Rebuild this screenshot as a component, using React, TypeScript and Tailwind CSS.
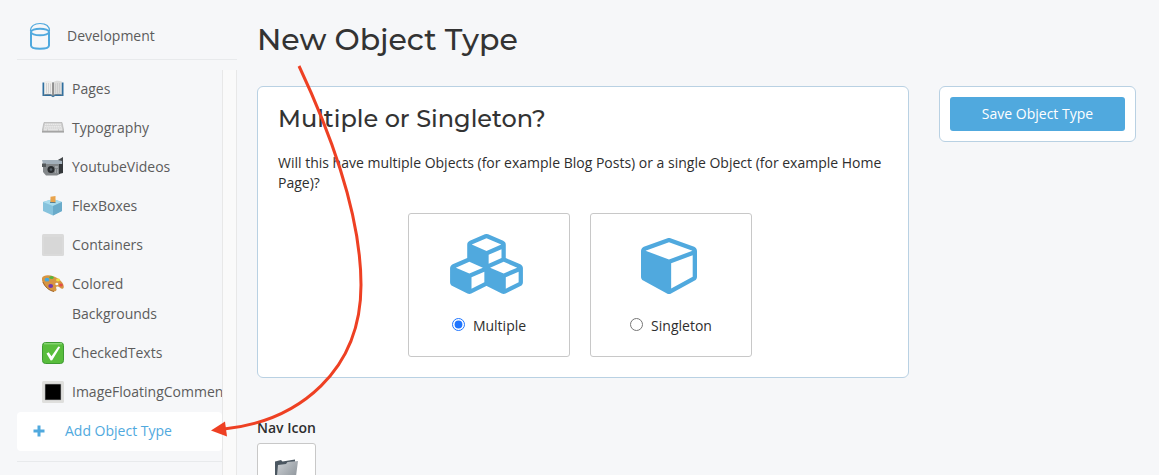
import React from "react";

const sans = "font-['Open_Sans','Noto_Sans',sans-serif]";
const display = "font-['Montserrat','Inter',sans-serif]";

function BucketIcon() {
  return (
    <svg width="22" height="28" viewBox="0 0 22 28" fill="none" stroke="#50a9de" aria-hidden="true">
      <path d="M1.500 9C1.500 4 5.500 1.500 11 1.500S20.500 4 20.500 9" strokeWidth="1.200" />
      <ellipse cx="11" cy="10" rx="9" ry="3.300" strokeWidth="2" />
      <path d="M2 9.500V23.500c0 2 3.500 3.200 9 3.200s9-1.200 9-3.200V9.500" strokeWidth="2" />
    </svg>
  );
}

function BookIcon() {
  return (
    <svg width="22" height="22" viewBox="0 0 22 22" aria-hidden="true">
      <path d="M.5 4.500h21V18h-8.500l-2 1.200L9 18H.5z" fill="#2f6f9f" />
      <path d="M2.200 3.500c3-1 7-1 8.800 1v13c-2-1.500-6-1.500-8.800-.5z" fill="#efeeec" />
      <path d="M19.800 3.500c-3-1-7-1-8.800 1v13c2-1.500 6-1.500 8.800-.5z" fill="#dcdcdb" />
      <path d="M11 4.500v13" stroke="#5b5b5d" strokeWidth="1.200" />
      <path d="M4.500 5v10M6.500 5v10M8.500 5.500v10M13.500 5.500v10M15.500 5v10M17.500 5v10" stroke="#bbb" strokeWidth=".5" />
      <path d="M1.500 17c3-1 7-1 9.500.8 2.500-1.800 6.500-1.800 9.500-.8" fill="none" stroke="#6f8290" />
    </svg>
  );
}

function KeyboardIcon() {
  return (
    <svg width="22" height="22" viewBox="0 0 22 22" aria-hidden="true">
      <path d="M2 5.500h18l1.800 8.500H.2z" fill="#cfcfcf" stroke="#a9a9a9" strokeWidth=".6" />
      <path d="M0 14h22v1.600H0z" fill="#a5a5a5" />
      <path d="M3 7.300h16M2.500 9.200h17M2 11h18" stroke="#f4f4f4" strokeWidth="1.100" strokeDasharray="1.500 .4" />
      <path d="M2 12.800h3M6 12.800h10M17 12.800h3" stroke="#eee" />
    </svg>
  );
}

function CameraIcon() {
  return (
    <svg width="22" height="22" viewBox="0 0 22 22" aria-hidden="true">
      <path d="M15 4.500l6-3.500v7h-6z" fill="#44484b" />
      <path d="M0 4h16l4 1v3H1z" fill="#a3b0bb" />
      <path d="M1 8h17v10l-3 1.500H4L1 16z" fill="#83878a" />
      <path d="M17 8h4v9l-4 1z" fill="#33373a" />
      <path d="M0 7.500h4V11H0z" fill="#54585b" />
      <circle cx="9" cy="13.500" r="3.500" fill="#292c2f" />
      <circle cx="9" cy="13.500" r="1.300" fill="#59616a" />
      <path d="M13 11h3M13 14h1M15 14h1M13 16h1M15 16h1" stroke="#c0c5c9" />
    </svg>
  );
}

function BallotIcon() {
  return (
    <svg width="22" height="22" viewBox="0 0 22 22" aria-hidden="true">
      <path d="M1 7l10-3L20 7v9l-9 4.500L1 16z" fill="#86c3dd" />
      <path d="M1 7l10-3L20 7l-9 4z" fill="#a9dced" />
      <path d="M11 11l9-4v9l-9 4.500z" fill="#6aabca" />
      <path d="M8 7.300l5.500.3" stroke="#45748d" />
      <path d="M8.500 1.800L13.500 1v6.200l-5-.2z" fill="#e9a44d" />
    </svg>
  );
}

function PaletteIcon() {
  return (
    <svg width="22" height="22" viewBox="0 0 22 22" aria-hidden="true">
      <path d="M0 5c1-3 7-3.500 12-1.500 6 2.300 10 7 9.800 10.500-.2 2.500-2.500 2-4 .5-2-2-4.500-1-3.500 1 1 2-1 3.500-3.500 2.800C5 17-1 9.500 0 5z" fill="#d79542" />
      <path d="M1 9c2 5 6 8.500 11 9.500" stroke="#9e652b" fill="none" />
      <ellipse cx="9.500" cy="4.500" rx="2.200" ry="1.500" fill="#55b63c" />
      <ellipse cx="5" cy="6.700" rx="2.300" ry="1.900" fill="#44a9df" />
      <ellipse cx="16" cy="7" rx="2" ry="1.400" fill="#eedb3f" />
      <ellipse cx="8.700" cy="13" rx="2.400" ry="1.900" fill="#7138ae" />
      <ellipse cx="19" cy="12" rx="1.900" ry="1.500" fill="#e14e46" />
      <ellipse cx="14.800" cy="11" rx="1.500" ry="1.200" fill="#f6f7f9" />
    </svg>
  );
}

function LightSquareIcon() {
  return (
    <svg width="22" height="22" viewBox="0 0 22 22" aria-hidden="true">
      <rect width="22" height="22" rx="1.500" fill="#dadada" />
      <rect x="2" y="3" width="18" height="17" fill="#d7d7d7" />
    </svg>
  );
}

function CheckIcon() {
  return (
    <svg width="22" height="22" viewBox="0 0 22 22" aria-hidden="true">
      <rect x=".5" y=".5" width="21" height="21" rx="3" fill="#58bd3c" stroke="#3e9a32" />
      <path d="M2 1.800h18" stroke="#99df86" />
      <path d="M4.500 11.500l2.200-1.300 2.800 4L16.300 4.500l1.900.4-8 13.300-1.500.2z" fill="#fff" />
    </svg>
  );
}

function BlackSquareIcon() {
  return (
    <svg width="22" height="22" viewBox="0 0 22 22" aria-hidden="true">
      <rect width="22" height="22" rx="1.500" fill="#dfdfdd" />
      <rect x="3" y="3" width="16" height="16" rx=".5" fill="#000" stroke="#bbb" strokeWidth=".6" />
    </svg>
  );
}

function FolderIcon() {
  return (
    <svg width="26" height="30" viewBox="0 0 26 30" aria-hidden="true">
      <defs>
        <linearGradient id="folder-front" x1="0" y1="0" x2="1" y2="1">
          <stop offset="0" stopColor="#cfd3d7" />
          <stop offset="1" stopColor="#7d858c" />
        </linearGradient>
      </defs>
      <path d="M1 3.500l6-1.500 1.500 1.500L21 1.500v24L1 28z" fill="#4b5761" />
      <path d="M4 7l8-1 1.500-2L24 3l-3 23-19 3z" fill="url(#folder-front)" />
    </svg>
  );
}

function CubesIcon() {
  return (
    <svg width="73" height="60" viewBox="0 0 2176 1792" fill="#50a9de" aria-hidden="true">
      <path d="M640 1632l384-192v-314l-384 164v342zm-64-454l404-173-404-173-404 173zm1088 454l384-192v-314l-384 164v342zm-64-454l404-173-404-173-404 173zm-448-293l384-165v-266l-384 164v267zm-64-379l441-189-441-189-441 189zm1088 518v416q0 36-19 67t-52 47l-448 224q-25 14-57 14t-57-14l-448-224q-4-2-7-4-2 2-7 4l-448 224q-25 14-57 14t-57-14l-448-224q-33-16-52-47t-19-67v-416q0-38 21.500-70t56.500-48l434-186v-400q0-38 21.500-70t56.500-48l448-192q23-10 50-10t50 10l448 192q35 16 56.500 48t21.500 70v400l434 186q36 16 57 48t21 70z" />
    </svg>
  );
}

function CubeIcon() {
  return (
    <svg width="56" height="56" viewBox="0 128 1664 1664" fill="#50a9de" aria-hidden="true">
      <path d="M896 1629l640-349v-636l-640 233v752zm-64-865l698-254-698-254-698 254zm832-252v768q0 35-18 65t-49 47l-704 384q-28 16-61 16t-61-16l-704-384q-31-17-49-47t-18-65v-768q0-40 23-73t61-50l704-256q22-8 44-8t44 8l704 256q38 17 61 50t23 73z" />
    </svg>
  );
}

const items = [
  { label: "Pages", Icon: BookIcon },
  { label: "Typography", Icon: KeyboardIcon },
  { label: "YoutubeVideos", Icon: CameraIcon },
  { label: "FlexBoxes", Icon: BallotIcon },
  { label: "Containers", Icon: LightSquareIcon },
  { label: "Colored Backgrounds", Icon: PaletteIcon },
  { label: "CheckedTexts", Icon: CheckIcon },
  { label: "ImageFloatingComments", Icon: BlackSquareIcon },
];

function Sidebar() {
  return (
    <nav className="ml-[17px] w-[220px] shrink-0">
      <a href="#development" className="flex h-[60px] items-center gap-4 border-b border-[#e8eaec] pt-3 pl-3 text-[#5c5c5c]">
        <BucketIcon />
        <span>Development</span>
      </a>
      <div className="mt-[10px] flex">
        <div className="min-w-0 flex-1 overflow-hidden">
          <ul>
            {items.map(({ label, Icon }) => (
              <li key={label}>
                <a href={"#" + label.replace(" ", "-")} className="flex gap-2 pt-1 pr-10 pb-[5px] pl-[25px] leading-[30px] text-[#5c5c5c]">
                  <span className="flex h-[30px] shrink-0 items-center">
                    <Icon />
                  </span>
                  <span className="min-w-0">{label}</span>
                </a>
              </li>
            ))}
          </ul>
          <a href="#add" className="flex items-center gap-5 rounded-sm bg-white pt-1 pb-[5px] pl-4 leading-[30px] text-[#50a9de]">
            <svg width="12" height="12" viewBox="0 0 12 12" fill="none" stroke="#50a9de" strokeWidth="3" aria-hidden="true">
              <path d="M6 0.500v11M0.500 6h11" />
            </svg>
            <span>Add Object Type</span>
          </a>
          <div className="mt-[10px] h-6 border-t border-[#e8eaec]" />
        </div>
        <div className="w-[15px] shrink-0 border-x border-[#e8e8e8] bg-[#fafafa]" />
      </div>
    </nav>
  );
}

function Choice({ label, Icon, checked }: { label: string; Icon: () => React.JSX.Element; checked?: boolean }) {
  return (
    <label className="flex h-[144px] w-[162px] flex-col items-center rounded-[3px] border border-[#c8c8c8] pt-5">
      <span className="flex h-[60px] items-end pr-[5px]">
        <Icon />
      </span>
      <span className="mt-[22px] flex items-baseline gap-2">
        <input type="radio" name="kind" defaultChecked={checked} className="size-[13px] accent-[#1f75fe]" />
        <span>{label}</span>
      </span>
    </label>
  );
}

function Arrow() {
  return (
    <svg className="pointer-events-none absolute top-0 left-0" width="400" height="475" viewBox="0 0 400 475" fill="none" aria-hidden="true">
      <path d="M299 66C330 132 361 215 361 285C361 370 300 421 224 429" stroke="#ee4023" strokeWidth="3" />
      <path d="M211 430.500L225 421.500L227 436.500z" fill="#ee4023" />
    </svg>
  );
}

export default function App() {
  return (
    <div className={"relative flex h-screen overflow-hidden bg-[#f6f7f9] text-[14px] leading-5 text-[#2e2e2e] " + sans}>
      <Sidebar />
      <main className="min-w-0 flex-1 pr-[23px] pl-5">
        <h1 className={"pt-5 text-[30px] leading-10 font-medium text-[#333] " + display}>New Object Type</h1>
        <div className="mt-[26px] flex items-start gap-[30px]">
          <div className="min-w-0 flex-1">
            <section className="rounded-md border border-[#b9d1e3] bg-white px-5 pt-4 pb-5">
              <h2 className={"text-[24px] leading-8 font-medium text-[#333] " + display}>Multiple or Singleton?</h2>
              <p className="mt-[18px]">
                Will this have multiple Objects (for example Blog Posts) or a single Object (for example Home Page)?
              </p>
              <div className="mt-5 flex justify-center gap-5 pr-[6px]">
                <Choice label="Multiple" Icon={CubesIcon} checked />
                <Choice label="Singleton" Icon={CubeIcon} />
              </div>
            </section>
            <div className="mt-10">
              <div className="font-semibold" id="nav-icon">Nav Icon</div>
              <button type="button" aria-labelledby="nav-icon" className="mt-[5px] flex h-[59px] w-[59px] items-center justify-center rounded-[3px] border border-[#c8c8c8] bg-white">
                <FolderIcon />
              </button>
            </div>
          </div>
          <aside className="w-[197px] shrink-0 rounded-md border border-[#b9d1e3] bg-white p-[10px]">
            <button type="button" className="h-[34px] w-full rounded-[3px] bg-[#50a9de] text-white">Save Object Type</button>
          </aside>
        </div>
      </main>
      <Arrow />
    </div>
  );
}
